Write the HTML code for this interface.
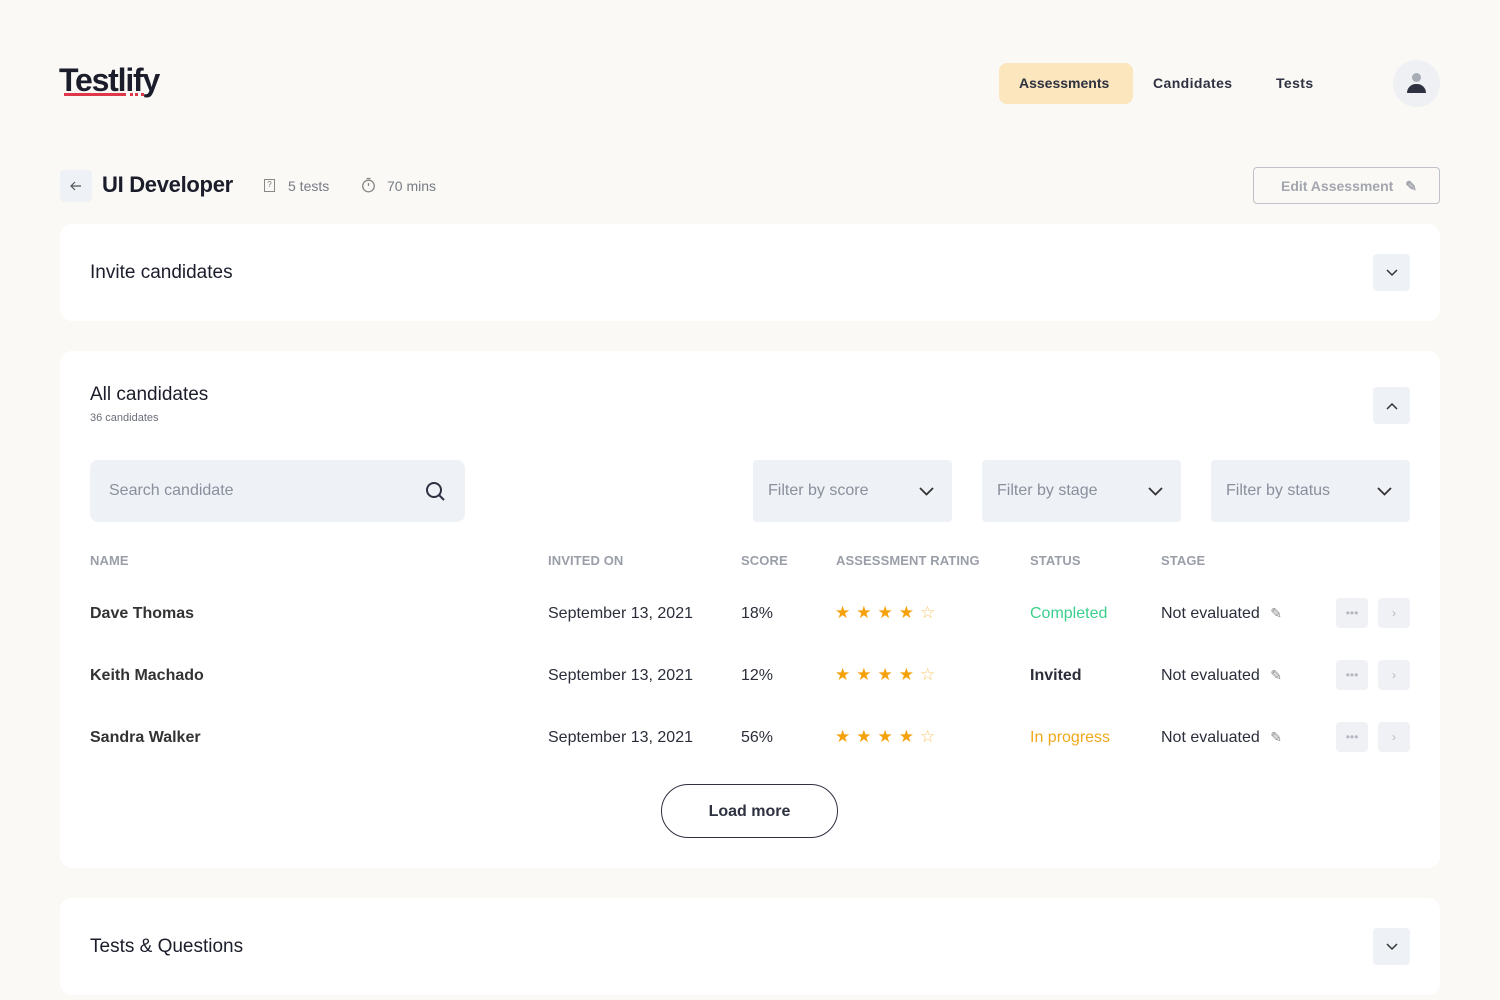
<!DOCTYPE html>
<html><head><meta charset="utf-8"><style>
*{box-sizing:border-box;margin:0;padding:0}
body{width:1500px;height:1000px;background:#faf9f6;font-family:"Liberation Sans",sans-serif;color:#1f2233;position:relative;overflow:hidden}
.a{position:absolute}
.card{position:absolute;left:60px;width:1380px;background:#fff;border-radius:12px}
.sq{position:absolute;width:37px;height:37px;background:#eef1f5;border-radius:4px;display:flex;align-items:center;justify-content:center}
.filter{position:absolute;top:460px;width:199px;height:62px;background:#eef1f6;border-radius:4px;color:#8a8f9c;font-size:16px;padding:0 18px 0 15px;display:flex;align-items:center;justify-content:space-between}
.th{position:absolute;top:553px;font-size:13px;color:#9a9ea8;font-weight:bold;letter-spacing:.1px}
.td{position:absolute;font-size:16px;color:#2b2e3a}
.stars{position:absolute;color:#f5a10a;font-size:17px;letter-spacing:6px;top:0}
.sb{position:absolute;width:32px;height:30px;background:#eff1f5;border-radius:4px;color:#b3b7c0;font-size:12px;display:flex;align-items:center;justify-content:center}
</style></head><body>
<div class="a" style="left:59px;top:62px;font-size:32px;font-weight:bold;letter-spacing:-1.2px;color:#1b1d2b">Testlify</div>
<div class="a" style="left:64px;top:93px;width:62px;height:3px;background:#e0384b"></div>
<div class="a" style="left:130px;top:93px;width:14px;height:3px;border-top:3px dotted #e0384b"></div>
<div class="a" style="left:999px;top:63px;width:134px;height:41px;background:#fbe6bd;border-radius:8px"></div>
<div class="a" style="left:1019px;top:75px;font-size:14px;font-weight:bold;color:#2e3140">Assessments</div>
<div class="a" style="left:1153px;top:75px;font-size:14px;font-weight:bold;color:#2e3140;letter-spacing:.4px">Candidates</div>
<div class="a" style="left:1276px;top:75px;font-size:14px;font-weight:bold;color:#2e3140;letter-spacing:.4px">Tests</div>
<div class="a" style="left:1393px;top:60px;width:47px;height:47px;border-radius:50%;background:#eef0f4"></div>
<div class="a" style="left:1412px;top:73px;width:9px;height:9px;border-radius:50%;background:#a8acb6"></div>
<div class="a" style="left:1407px;top:84px;width:19px;height:9px;border-radius:9px 9px 0 0;background:#2e3140"></div>

<div class="sq" style="left:60px;top:170px;width:32px;height:32px"><svg width="12" height="10" viewBox="0 0 12 10"><path d="M11 5H1M5 1L1 5l4 4" stroke="#555" fill="none" stroke-width="1.2"/></svg></div>
<div class="a" style="left:102px;top:172px;font-size:22px;font-weight:bold;color:#1b1d2b;letter-spacing:-.3px">UI Developer</div>
<div class="a" style="left:264px;top:179px;width:11px;height:13px;border:1px solid #888;font-size:8px;text-align:center;color:#777">?</div>
<div class="a" style="left:288px;top:178px;font-size:14px;color:#777b85">5 tests</div>
<svg class="a" style="left:361px;top:177px" width="15" height="16" viewBox="0 0 15 16"><circle cx="7.5" cy="9" r="5.8" stroke="#888" fill="none" stroke-width="1.3"/><path d="M5.5 1.5h4M7.5 9V6" stroke="#888" stroke-width="1.3"/></svg>
<div class="a" style="left:387px;top:178px;font-size:14px;color:#777b85">70 mins</div>
<div class="a" style="left:1253px;top:167px;width:187px;height:37px;border:1px solid #bfc2c8;border-radius:4px;font-size:14px;font-weight:bold;color:#a3a6ae;padding:10px 0 0 27px">Edit Assessment <span style="margin-left:8px">✎</span></div>

<div class="card" style="top:224px;height:97px"></div>
<div class="a" style="left:90px;top:262px;font-size:19px;color:#1b1d2b">Invite candidates</div>
<div class="sq" style="left:1373px;top:254px"><svg width="12" height="8"><path d="M1 1l5 5 5-5" stroke="#333" fill="none" stroke-width="1.5"/></svg></div>

<div class="card" style="top:351px;height:517px"></div>
<div class="a" style="left:90px;top:384px;font-size:19px;color:#1b1d2b">All candidates</div>
<div class="a" style="left:90px;top:412px;font-size:11px;color:#6a6e78">36 candidates</div>
<div class="sq" style="left:1373px;top:387px"><svg width="12" height="8"><path d="M1 7l5-5 5 5" stroke="#333" fill="none" stroke-width="1.5"/></svg></div>
<div class="a" style="left:90px;top:460px;width:375px;height:62px;background:#eef1f6;border-radius:8px;color:#8a8f9c;font-size:16px;padding:22px 19px">Search candidate<svg style="position:absolute;right:19px;top:21px" width="21" height="21"><circle cx="9" cy="9" r="7" stroke="#2e3140" stroke-width="2" fill="none"/><path d="M14 14l5 5" stroke="#2e3140" stroke-width="2"/></svg></div>
<div class="filter" style="left:753px">Filter by score<svg width="15" height="9"><path d="M1 1l6.5 6.5L14 1" stroke="#333" fill="none" stroke-width="1.8"/></svg></div>
<div class="filter" style="left:982px">Filter by stage<svg width="15" height="9"><path d="M1 1l6.5 6.5L14 1" stroke="#333" fill="none" stroke-width="1.8"/></svg></div>
<div class="filter" style="left:1211px">Filter by status<svg width="15" height="9"><path d="M1 1l6.5 6.5L14 1" stroke="#333" fill="none" stroke-width="1.8"/></svg></div>

<div class="th" style="left:90px">NAME</div><div class="th" style="left:548px">INVITED ON</div><div class="th" style="left:741px">SCORE</div><div class="th" style="left:836px">ASSESSMENT RATING</div><div class="th" style="left:1030px">STATUS</div><div class="th" style="left:1161px">STAGE</div>

<div class="td" style="left:90px;top:605px;font-weight:bold;color:#333">Dave Thomas</div><div class="td" style="left:548px;top:605px">September 13, 2021</div><div class="td" style="left:741px;top:605px">18%</div><div class="stars" style="left:835px;top:603px">★★★★<span style="color:#f8c86a">☆</span></div><div class="td" style="left:1030px;top:605px;color:#3ccf8e">Completed</div><div class="td" style="left:1161px;top:605px">Not evaluated <span style="color:#888;font-size:14px;margin-left:6px">✎</span></div><div class="sb" style="left:1336px;top:598px">•••</div><div class="sb" style="left:1378px;top:598px">›</div>

<div class="td" style="left:90px;top:667px;font-weight:bold;color:#333">Keith Machado</div><div class="td" style="left:548px;top:667px">September 13, 2021</div><div class="td" style="left:741px;top:667px">12%</div><div class="stars" style="left:835px;top:665px">★★★★<span style="color:#f8c86a">☆</span></div><div class="td" style="left:1030px;top:667px;font-weight:bold">Invited</div><div class="td" style="left:1161px;top:667px">Not evaluated <span style="color:#888;font-size:14px;margin-left:6px">✎</span></div><div class="sb" style="left:1336px;top:660px">•••</div><div class="sb" style="left:1378px;top:660px">›</div>

<div class="td" style="left:90px;top:729px;font-weight:bold;color:#333">Sandra Walker</div><div class="td" style="left:548px;top:729px">September 13, 2021</div><div class="td" style="left:741px;top:729px">56%</div><div class="stars" style="left:835px;top:727px">★★★★<span style="color:#f8c86a">☆</span></div><div class="td" style="left:1030px;top:729px;color:#f0a81c">In progress</div><div class="td" style="left:1161px;top:729px">Not evaluated <span style="color:#888;font-size:14px;margin-left:6px">✎</span></div><div class="sb" style="left:1336px;top:722px">•••</div><div class="sb" style="left:1378px;top:722px">›</div>

<div class="a" style="left:661px;top:784px;width:177px;height:54px;border:1px solid #2e3140;border-radius:27px;text-align:center;line-height:54px;font-size:16px;font-weight:bold;color:#2e3140">Load more</div>

<div class="card" style="top:898px;height:97px"></div>
<div class="a" style="left:90px;top:936px;font-size:19px;color:#1b1d2b">Tests &amp; Questions</div>
<div class="sq" style="left:1373px;top:928px"><svg width="12" height="8"><path d="M1 1l5 5 5-5" stroke="#333" fill="none" stroke-width="1.5"/></svg></div>
</body></html>
